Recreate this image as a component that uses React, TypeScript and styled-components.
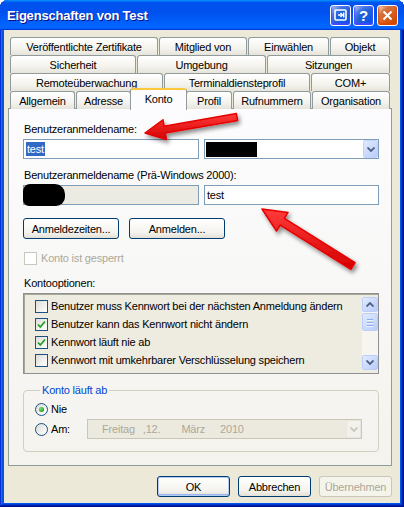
import React from 'react';
import styled, { createGlobalStyle } from 'styled-components';

const GlobalStyle = createGlobalStyle`
  html, body {
    margin: 0;
    padding: 0;
    background: #fff;
  }
  body {
    font-family: "Liberation Sans", Arial, sans-serif;
    font-size: 11px;
    letter-spacing: -0.2px;
    color: #000;
  }
  * {
    box-sizing: border-box;
  }
`

const Window = styled.div`
  position: relative;
  width: 404px;
  height: 507px;
  display: flex;
  flex-direction: column;
  background: #0055ea;
  border-radius: 8px 8px 0 0;
  overflow: hidden;
  box-shadow: inset -1px -1px #00138c, inset 1px 1px #0831d9, inset -2px -2px #001ea0,
    inset 2px 2px #166aee, inset -3px -3px #003bda, inset 3px 3px #0855dd;
`

const TitleBar = styled.div`
  height: 30px;
  flex: none;
  display: flex;
  align-items: center;
  padding: 0 6px 0 7px;
  background: linear-gradient(180deg, #0997ff, #0053ee 8%, #0050ee 40%, #0066ff 88%, #0066ff 93%, #005bff 95%, #003dd7 96%, #003dd7);
`

const Title = styled.div`
  font-family: "Liberation Sans", Arial, sans-serif;
  font-weight: bold;
  font-size: 13px;
  letter-spacing: -0.2px;
  color: #fff;
  text-shadow: 1px 1px #0f1089;
`

const TitleButtons = styled.div`
  margin-left: auto;
  display: flex;
  gap: 2px;
`

const TitleButton = styled.div<{ $red?: boolean }>`
  width: 21px;
  height: 21px;
  border: 1px solid #fff;
  border-radius: 3px;
  display: flex;
  align-items: center;
  justify-content: center;
  color: #fff;
  font-weight: bold;
  font-size: 15px;
  font-family: "Liberation Sans", Arial, sans-serif;
  margin-left: ${p => (p.$red ? '1px' : '0')};
  background: ${p =>
    p.$red
      ? 'radial-gradient(circle at 90% 90%, #cc4600 0%, #dc6527 55%, #cd7546 70%, #ffccb2 90%, #fff 100%)'
      : 'radial-gradient(circle at 90% 90%, #0054e9 0%, #2263d5 55%, #4479e4 70%, #a3bbec 90%, #fff 100%)'};
  box-shadow: ${p => (p.$red ? 'inset 0 -1px 2px 1px #da4600' : 'inset 0 -1px 2px 1px #4646ff')};
`

const Client = styled.div`
  flex: 1;
  margin: 0 4px 4px;
  background: #ece9d8;
  padding: 7px 8px 0 4px;
  display: flex;
  flex-direction: column;
`

const TabStrip = styled.div`
  position: relative;
  z-index: 1;
  padding: 0 2px;
  display: flex;
  flex-direction: column;
`

const TabRow = styled.div`
  height: 18px;
  display: flex;
  align-items: flex-end;
  gap: 1px;
`

const Tab = styled.div<{ $w: number; $active?: boolean }>`
  width: ${p => (p.$active ? p.$w + 4 : p.$w)}px;
  height: ${p => (p.$active ? 22 : 18)}px;
  margin: ${p => (p.$active ? '0 -2px -1px' : '0')};
  position: relative;
  z-index: ${p => (p.$active ? 2 : 1)};
  flex: none;
  display: flex;
  align-items: center;
  justify-content: center;
  padding-bottom: ${p => (p.$active ? '3px' : '0')};
  border: 1px solid #919b9c;
  border-bottom: none;
  border-top: ${p => (p.$active ? '2px solid #ffc83c' : '1px solid #919b9c')};
  border-radius: 3px 3px 0 0;
  background: ${p => (p.$active ? '#fcfcfe' : 'linear-gradient(#fff, #f4f3ee 60%, #e6e4da)')};
  white-space: nowrap;
`

const Panel = styled.div`
  height: 358px;
  margin-top: -1px;
  border: 1px solid #919b9c;
  background: linear-gradient(#fcfcfe, #f4f3ee);
  padding: 14px 12px 0 14px;
  display: flex;
  flex-direction: column;
`

const Label = styled.div<{ $gap?: number; $disabled?: boolean }>`
  margin-top: ${p => p.$gap ?? 0}px;
  height: 13px;
  line-height: 13px;
  padding-left: 1px;
  color: ${p => (p.$disabled ? '#aca899' : '#000')};
  white-space: nowrap;
`

const FieldRow = styled.div`
  margin-top: 3px;
  display: flex;
  gap: 5px;
`

const Field = styled.div<{ $w: number; $disabled?: boolean }>`
  width: ${p => p.$w}px;
  height: 20px;
  border: 1px solid #7f9db9;
  background: ${p => (p.$disabled ? '#ebebe4' : '#fff')};
  display: flex;
  align-items: center;
  padding-left: 2px;
  white-space: nowrap;
`

const Selected = styled.span`
  background: #316ac5;
  color: #fff;
  padding: 0 1px;
  line-height: 14px;
`

const Redact = styled.span<{ $w: number; $h: number; $blob?: boolean }>`
  width: ${p => p.$w}px;
  height: ${p => p.$h}px;
  flex: none;
  background: #000;
  margin-left: ${p => (p.$blob ? -3 : -1)}px;
  border-radius: ${p => (p.$blob ? '7px 10px 9px 6px' : '0')};
`

const DropButton = styled.span<{ $disabled?: boolean }>`
  margin-left: auto;
  width: 15px;
  height: 18px;
  flex: none;
  display: flex;
  align-items: center;
  justify-content: center;
  border: 1px solid ${p => (p.$disabled ? '#e8e6dd' : '#c3d3fd')};
  border-radius: 2px;
  background: ${p => (p.$disabled ? '#f2f1ec' : 'linear-gradient(135deg, #e0eafe, #b9cdfb)')};
`

const ButtonRow = styled.div`
  margin-top: 13px;
  display: flex;
  gap: 10px;
`

const PushButton = styled.button<{ $w: number; $default?: boolean; $disabled?: boolean }>`
  width: ${p => p.$w}px;
  height: 21px;
  padding: 0;
  font: inherit;
  letter-spacing: inherit;
  color: ${p => (p.$disabled ? '#aca899' : '#000')};
  border: 1px solid ${p => (p.$disabled ? '#c9c7ba' : '#003c74')};
  border-radius: 3px;
  background: ${p => (p.$disabled ? '#f5f4ea' : 'linear-gradient(#fff, #f4f3ee 70%, #e3e0d6)')};
  box-shadow: ${p => (p.$default ? 'inset 0 0 0 1px #b4cbf5, inset 0 -1px 0 1px #98b6ea' : 'none')};
`

const CheckRow = styled.div<{ $gap?: number }>`
  margin-top: ${p => p.$gap ?? 0}px;
  height: 18px;
  display: flex;
  align-items: center;
  gap: 3px;
  white-space: nowrap;
`

const Box = styled.span<{ $disabled?: boolean }>`
  width: 13px;
  height: 13px;
  flex: none;
  display: flex;
  align-items: center;
  justify-content: center;
  border: 1px solid ${p => (p.$disabled ? '#cac8bb' : '#1c5180')};
  background: ${p => (p.$disabled ? '#fff' : 'linear-gradient(135deg, #dcdcd7, #fff)')};
`

const ListBox = styled.div`
  margin-top: 3px;
  height: 81px;
  border: 1px solid #8f9093;
  box-shadow: inset 1px 1px 0 #a9a797;
  background: #eeebe1;
  padding: 3px 0 3px 11px;
  display: flex;
`

const Items = styled.div`
  flex: 1;
  display: flex;
  flex-direction: column;
`

const ScrollBar = styled.div`
  width: 16px;
  display: flex;
  flex-direction: column;
  background: #f6f5f0;
`

const ScrollButton = styled.div<{ $h: number }>`
  height: ${p => p.$h}px;
  display: flex;
  flex-direction: column;
  align-items: center;
  justify-content: center;
  gap: 2px;
  border: 1px solid #bbcdf8;
  border-radius: 2px;
  background: linear-gradient(135deg, #e2ebfe, #b8ccfa);
`

const Grip = styled.span`
  width: 6px;
  height: 1px;
  background: #8fa9ea;
  box-shadow: 0 1px #eef3fe;
`

const Track = styled.div`
  flex: 1;
`

const Group = styled.fieldset`
  margin: 10px 0 0;
  padding: 5px 0 0 11px;
  height: 68px;
  min-width: 0;
  border: 1px solid #d0d0bf;
  border-radius: 4px;
`

const Legend = styled.legend`
  margin-left: 5px;
  padding: 0 2px;
  line-height: 13px;
  color: #0046d5;
`

const RadioRow = styled.div<{ $gap?: number }>`
  margin-top: ${p => p.$gap ?? 0}px;
  display: flex;
  align-items: center;
`

const RadioLabel = styled.div<{ $w?: number }>`
  width: ${p => (p.$w ? `${p.$w}px` : 'auto')};
  height: 14px;
  flex: none;
  display: flex;
  align-items: center;
  gap: 3px;
`

const Radio = styled.span`
  width: 13px;
  height: 13px;
  flex: none;
  border-radius: 50%;
  border: 1px solid #1c5180;
  background: linear-gradient(135deg, #dcdcd7, #fff);
  display: flex;
  align-items: center;
  justify-content: center;
`

const Dot = styled.span`
  width: 5px;
  height: 5px;
  border-radius: 50%;
  background: radial-gradient(circle at 35% 35%, #7ce07c, #21a121 70%);
`

const DateBox = styled.div`
  width: 275px;
  height: 20px;
  border: 1px solid #c9c7ba;
  background: #eceadf;
  color: #aca899;
  display: flex;
  align-items: center;
  padding-left: 14px;
  white-space: nowrap;
`

const DatePart = styled.span<{ $gap?: number }>`
  margin-left: ${p => p.$gap ?? 0}px;
`

const Footer = styled.div`
  margin-top: 10px;
  display: flex;
  justify-content: flex-end;
  gap: 8px;
`

const Overlay = styled.svg`
  position: absolute;
  left: 0;
  top: 0;
  pointer-events: none;
`

const tabRows = [
  [
    { t: 'Veröffentlichte Zertifikate', w: 148 },
    { t: 'Mitglied von', w: 88 },
    { t: 'Einwählen', w: 81 },
    { t: 'Objekt', w: 60 },
  ],
  [
    { t: 'Sicherheit', w: 126 },
    { t: 'Umgebung', w: 129 },
    { t: 'Sitzungen', w: 123 },
  ],
  [
    { t: 'Remoteüberwachung', w: 153 },
    { t: 'Terminaldiensteprofil', w: 146 },
    { t: 'COM+', w: 79 },
  ],
  [
    { t: 'Allgemein', w: 65 },
    { t: 'Adresse', w: 55 },
    { t: 'Konto', w: 53, active: true },
    { t: 'Profil', w: 46 },
    { t: 'Rufnummern', w: 78 },
    { t: 'Organisation', w: 78 },
  ],
];

const options = [
  { t: 'Benutzer muss Kennwort bei der nächsten Anmeldung ändern', on: false },
  { t: 'Benutzer kann das Kennwort nicht ändern', on: true },
  { t: 'Kennwort läuft nie ab', on: true },
  { t: 'Kennwort mit umkehrbarer Verschlüsselung speichern', on: false },
];

const Chevron = ({ up, color = '#4d6185' }: { up?: boolean; color?: string }) => (
  <svg width="8" height="5" viewBox="0 0 8 5">
    <polyline
      points={up ? '0.5,4.5 4,1 7.5,4.5' : '0.5,0.5 4,4 7.5,0.5'}
      fill="none"
      stroke={color}
      strokeWidth="1.8"
    />
  </svg>
);

const Check = () => (
  <svg width="9" height="9" viewBox="0 0 9 9">
    <polyline points="1,4.5 3.3,7 8,1.5" fill="none" stroke="#21a121" strokeWidth="1.8" />
  </svg>
);

const App = () => {
  return (
    <>
      <GlobalStyle />
      <Window>
        <TitleBar>
          <Title>Eigenschaften von Test</Title>
          <TitleButtons>
            <TitleButton>
              <svg width="13" height="12" viewBox="0 0 13 12">
                <rect x="1" y="1" width="11" height="10" rx="1" fill="none" stroke="#fff" strokeWidth="1.6" />
                <line x1="4" y1="6" x2="8" y2="6" stroke="#fff" strokeWidth="1.6" />
                <polyline points="6.5,4 8.5,6 6.5,8" fill="none" stroke="#fff" strokeWidth="1.4" />
                <line x1="9.7" y1="3.5" x2="9.7" y2="8.5" stroke="#fff" strokeWidth="1.4" />
              </svg>
            </TitleButton>
            <TitleButton>?</TitleButton>
            <TitleButton $red>
              <svg width="11" height="11" viewBox="0 0 11 11">
                <path d="M1.5 1.5 L9.5 9.5 M9.5 1.5 L1.5 9.5" stroke="#fff" strokeWidth="2" />
              </svg>
            </TitleButton>
          </TitleButtons>
        </TitleBar>
        <Client>
          <TabStrip>
            {tabRows.map((row, i) => (
              <TabRow key={i}>
                {row.map(tab => (
                  <Tab key={tab.t} $w={tab.w} $active={'active' in tab && tab.active}>
                    {tab.t}
                  </Tab>
                ))}
              </TabRow>
            ))}
          </TabStrip>
          <Panel>
            <Label>Benutzeranmeldename:</Label>
            <FieldRow>
              <Field $w={176}>
                <Selected>test</Selected>
              </Field>
              <Field $w={175}>
                <Redact $w={51} $h={15} />
                <DropButton>
                  <Chevron />
                </DropButton>
              </Field>
            </FieldRow>
            <Label $gap={10}>Benutzeranmeldename (Prä-Windows 2000):</Label>
            <FieldRow>
              <Field $w={176} $disabled>
                <Redact $w={42} $h={22} $blob />
              </Field>
              <Field $w={175}>test</Field>
            </FieldRow>
            <ButtonRow>
              <PushButton $w={96}>Anmeldezeiten...</PushButton>
              <PushButton $w={96}>Anmelden...</PushButton>
            </ButtonRow>
            <CheckRow $gap={10} style={{ paddingLeft: 1 }}>
              <Box $disabled />
              <Label $disabled>Konto ist gesperrt</Label>
            </CheckRow>
            <Label $gap={10}>Kontooptionen:</Label>
            <ListBox>
              <Items>
                {options.map(o => (
                  <CheckRow key={o.t}>
                    <Box>{o.on && <Check />}</Box>
                    <span>{o.t}</span>
                  </CheckRow>
                ))}
              </Items>
              <ScrollBar>
                <ScrollButton $h={15}>
                  <Chevron up />
                </ScrollButton>
                <ScrollButton $h={18} style={{ marginTop: 1 }}>
                  <Grip />
                  <Grip />
                  <Grip />
                </ScrollButton>
                <Track />
                <ScrollButton $h={15}>
                  <Chevron />
                </ScrollButton>
              </ScrollBar>
            </ListBox>
            <Group>
              <Legend>Konto läuft ab</Legend>
              <RadioRow>
                <RadioLabel>
                  <Radio>
                    <Dot />
                  </Radio>
                  Nie
                </RadioLabel>
              </RadioRow>
              <RadioRow $gap={3}>
                <RadioLabel $w={52}>
                  <Radio />
                  Am:
                </RadioLabel>
                <DateBox>
                  <DatePart>Freitag</DatePart>
                  <DatePart $gap={8}>,12.</DatePart>
                  <DatePart $gap={21}>März</DatePart>
                  <DatePart $gap={15}>2010</DatePart>
                  <DropButton $disabled>
                    <Chevron color="#c9c7ba" />
                  </DropButton>
                </DateBox>
              </RadioRow>
            </Group>
          </Panel>
          <Footer>
            <PushButton $w={73} $default>OK</PushButton>
            <PushButton $w={73}>Abbrechen</PushButton>
            <PushButton $w={73} $disabled>Übernehmen</PushButton>
          </Footer>
        </Client>
        <Overlay width={404} height={507} viewBox="0 0 404 507">
          <defs>
            <linearGradient id="redFill" x1="0" y1="0" x2="0" y2="1">
              <stop offset="0" stopColor="#ff3b3b" />
              <stop offset="1" stopColor="#d40000" />
            </linearGradient>
            <filter id="shadow" x="-30%" y="-30%" width="160%" height="180%">
              <feDropShadow dx="2" dy="3" stdDeviation="2" floodColor="#000" floodOpacity="0.45" />
            </filter>
          </defs>
          <polygon
            points="145,133 163,119.8 164.1,126.2 236.4,113.6 237.6,120.4 165.3,133 166.4,139.5"
            fill="url(#redFill)"
            stroke="#e60000"
            strokeWidth="1.5"
            strokeLinejoin="round"
            filter="url(#shadow)"
          />
          <polygon
            points="262,209 288.1,212.4 284.4,218.3 355.1,262.6 350.9,269.4 280.2,225.1 276.5,231"
            fill="url(#redFill)"
            stroke="#e60000"
            strokeWidth="1.5"
            strokeLinejoin="round"
            filter="url(#shadow)"
          />
        </Overlay>
      </Window>
    </>
  );
};

export default App;
